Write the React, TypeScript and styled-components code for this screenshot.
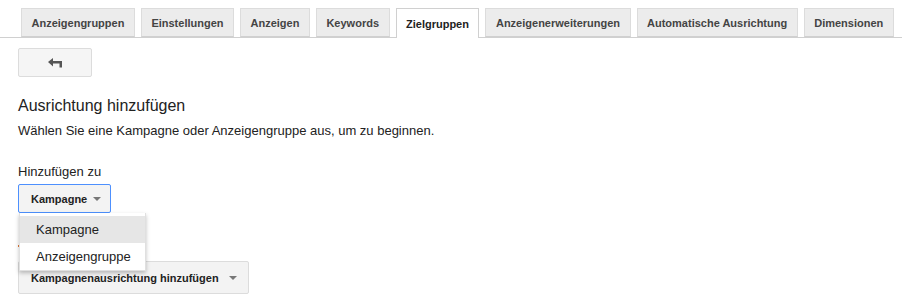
import React from "react";
import styled, { createGlobalStyle } from "styled-components";

const Global = createGlobalStyle`
  html, body { margin: 0; padding: 0; background: #fff; }
  body { font-family: "Liberation Sans", Arial, sans-serif; color: #222; }
`;

const Page = styled.div`
  width: 902px;
  height: 301px;
  overflow: hidden;
  position: relative;
`;

const TabBar = styled.div`
  display: flex;
  gap: 6px;
  padding: 8px 0 0 21px;
  border-bottom: 1px solid #d0d0d0;
  height: 29px;
  box-sizing: content-box;
`;

const Tab = styled.div<{ $active?: boolean }>`
  box-sizing: border-box;
  height: ${(p) => (p.$active ? "30px" : "29px")};
  margin-bottom: ${(p) => (p.$active ? "-1px" : "0")};
  padding: 0 9.5px;
  display: flex;
  align-items: center;
  border: 1px solid ${(p) => (p.$active ? "#d0d0d0" : "#dcdcdc")};
  border-bottom: ${(p) => (p.$active ? "none" : "1px solid #d0d0d0")};
  background: ${(p) => (p.$active ? "#fff" : "#ececec")};
  font-size: 11px;
  font-weight: bold;
  color: ${(p) => (p.$active ? "#222" : "#444")};
  white-space: nowrap;
`;

const Content = styled.div`
  padding: 10px 0 0 18px;
`;

const BackButton = styled.div`
  box-sizing: border-box;
  width: 74px;
  height: 29px;
  border: 1px solid #dcdcdc;
  background: #f5f5f5;
  border-radius: 2px;
  display: flex;
  align-items: center;
  justify-content: center;
`;

const Heading = styled.div`
  font-size: 16px;
  color: #222;
  margin-top: 19px;
  line-height: 20px;
`;

const Sub = styled.div`
  font-size: 13px;
  color: #222;
  margin-top: 7px;
  line-height: 16px;
`;

const Label = styled.div`
  font-size: 13px;
  color: #222;
  margin-top: 25px;
  line-height: 16px;
`;

const SelectWrap = styled.div`
  position: relative;
  margin-top: 4px;
`;

const SelectButton = styled.div<{ $focused?: boolean }>`
  box-sizing: border-box;
  display: inline-flex;
  align-items: center;
  gap: 4px;
  height: 29px;
  padding: 0 9px 0 12px;
  border: 1px solid ${(p) => (p.$focused ? "#4d90fe" : "#dcdcdc")};
  border-radius: 2px;
  background: #f3f3f3;
  font-size: 11px;
  font-weight: bold;
  color: #222;
  white-space: nowrap;
`;

const Caret = styled.span`
  width: 0;
  height: 0;
  border-left: 4px solid transparent;
  border-right: 4px solid transparent;
  border-top: 4px solid #777;
  margin-left: 2px;
`;

const Marker = styled.div`
  margin-top: 32px;
  width: 3px;
  height: 2px;
  background: #e07b39;
`;

const SecondButton = styled(SelectButton)`
  display: flex;
  width: 231px;
  height: 33px;
  padding: 0 10px 0 12px;
  gap: 8px;
  margin-top: 14px;
`;

const Menu = styled.div`
  position: absolute;
  left: 1px;
  top: 29px;
  width: 127px;
  background: #fff;
  box-shadow: 0 2px 4px rgba(0, 0, 0, 0.25);
  border: 1px solid rgba(0, 0, 0, 0.12);
  border-top: none;
  padding: 3px 0 0;
  box-sizing: border-box;
  z-index: 2;
`;

const MenuItem = styled.div<{ $hover?: boolean }>`
  height: 27px;
  display: flex;
  align-items: center;
  padding-left: 16px;
  font-size: 13px;
  color: #222;
  background: ${(p) => (p.$hover ? "#e6e6e6" : "#fff")};
`;

const tabs = [
  "Anzeigengruppen",
  "Einstellungen",
  "Anzeigen",
  "Keywords",
  "Zielgruppen",
  "Anzeigenerweiterungen",
  "Automatische Ausrichtung",
  "Dimensionen",
];

export default function App() {
  return (
    <Page>
      <Global />
      <TabBar>
        {tabs.map((t) => (
          <Tab key={t} $active={t === "Zielgruppen"}>
            {t}
          </Tab>
        ))}
      </TabBar>
      <Content>
        <BackButton>
          <svg width="15" height="10" viewBox="0 0 15 10">
            <path d="M0 4 L5 0 L5 3 L14 3 L14 9.5 L11.5 9.5 L11.5 5.5 L5 5.5 L5 8.5 Z" fill="#555" />
          </svg>
        </BackButton>
        <Heading>Ausrichtung hinzufügen</Heading>
        <Sub>Wählen Sie eine Kampagne oder Anzeigengruppe aus, um zu beginnen.</Sub>
        <Label>Hinzufügen zu</Label>
        <SelectWrap>
          <SelectButton $focused>
            Kampagne <Caret />
          </SelectButton>
          <Menu>
            <MenuItem $hover>Kampagne</MenuItem>
            <MenuItem>Anzeigengruppe</MenuItem>
          </Menu>
          <Marker />
          <SecondButton>
            Kampagnenausrichtung hinzufügen <Caret />
          </SecondButton>
        </SelectWrap>
      </Content>
    </Page>
  );
}
